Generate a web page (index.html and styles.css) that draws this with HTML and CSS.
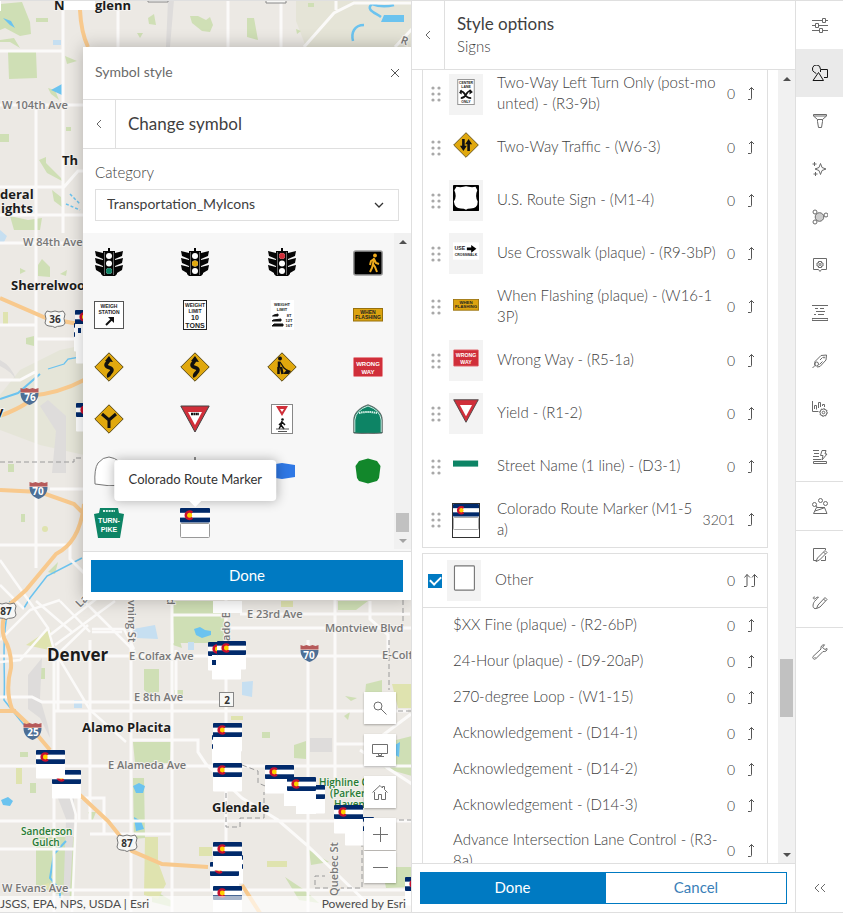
FILE: index.html
```html
<!DOCTYPE html>
<html lang="en">
<head>
<meta charset="utf-8">
<title>Style options - Signs</title>
<link rel="stylesheet" href="styles.css">
</head>
<body>
<svg class="defs" aria-hidden="true">
  <defs>
    <symbol id="flag-top" viewBox="0 0 30 15">
      <rect width="30" height="14.5" rx="1" fill="#012a6b"/><rect y="4.8" width="30" height="4.8" fill="#fff"/>
      <path d="M13 3.600A5 5 0 1 0 13 10.800L10.500 7.200z" fill="#c8102e"/><circle cx="9.600" cy="7.200" r="2.500" fill="#ffd100"/>
    </symbol>
    <symbol id="co" viewBox="0 0 30 30">
      <rect y="14" width="30" height="15.5" rx="1" fill="#fff"/><use href="#flag-top" width="30" height="15"/>
    </symbol>
    <symbol id="co-line" viewBox="0 0 30 30">
      <rect x=".5" y="15.5" width="29" height="14" rx="1" fill="#fff" stroke="#999"/><use href="#flag-top" width="30" height="15"/>
    </symbol>
    <symbol id="signal" viewBox="0 0 30 30">
      <path d="M14 0h2v3h5v2l8-2-1 5-7 3v1l8-2-1 5-7 3v1l8-2-1 5-5 3v1l-2 2H9l-2-2v-1l-5-3-1-5 8 2v-1l-7-3-1-5 8 2v-1L2 8 1 3l8 2V3h5z" fill="#050505"/>
      <path d="M10.500 4v23M19.500 4v23" stroke="#aaa" stroke-width=".6"/>
      <circle cx="15" cy="8" r="3" fill="#fff"/><circle cx="15" cy="15.500" r="3" fill="#fff"/><circle cx="15" cy="23" r="3" fill="#fff"/>
    </symbol>
    <symbol id="diamond" viewBox="0 0 30 30"><path d="M15 .8 29.200 15 15 29.200.8 15z" fill="#e0a80e" stroke="#5b4a16" stroke-width="1" stroke-linejoin="round"/></symbol>
    <symbol id="winding" viewBox="0 0 30 30"><use href="#diamond"/><path d="M15 25c-2-3 3-4 3-7s-6-2-6-5c0-2 2-2 3-5" fill="none" stroke="#111" stroke-width="3.600"/><path d="M15 4l4 6-8-1z" fill="#111"/></symbol>
    <symbol id="wrong" viewBox="0 0 30 20"><rect x=".5" y=".5" width="29" height="19" rx="1" fill="#d02f3a" stroke="#e98c91"/><text class="sign-text sign-text--light sign-text--medium" x="15" y="8.500">WRONG</text><text class="sign-text sign-text--light sign-text--medium" x="15" y="16.500">WAY</text></symbol>
    <symbol id="flashing" viewBox="0 0 30 14"><rect x=".5" y=".5" width="29" height="12.500" fill="#dca310" stroke="#97700d"/><text class="sign-text" x="15" y="5.500">WHEN</text><text class="sign-text" x="15" y="11">FLASHING</text></symbol>
    <symbol id="yield" viewBox="0 0 30 28"><path d="M.8 1h28.400L15 27z" fill="#d02f3a" stroke="#444" stroke-linejoin="round"/><path d="M8 7h14l-7 13z" fill="#fff"/></symbol>
    <symbol id="grip" viewBox="0 0 10 16"><g fill="#a9a9a9"><circle cx="2" cy="2" r="1.600"/><circle cx="8" cy="2" r="1.600"/><circle cx="2" cy="8" r="1.600"/><circle cx="8" cy="8" r="1.600"/><circle cx="2" cy="14" r="1.600"/><circle cx="8" cy="14" r="1.600"/></g></symbol>
    <symbol id="move" viewBox="0 0 16 16"><path d="M5 13.500h2.500q1 0 1-1v-11M6 4l2.500-2.500L11 4" fill="none" stroke="#555"/></symbol>
    <symbol id="move-all" viewBox="0 0 16 16"><path d="M1 13.500h2q1 0 1-1v-11M1.500 4.500 4 1.500l3 3M8.500 13.500h2q1 0 1-1v-11M9 4.500l2.500-3 3 3" fill="none" stroke="#555"/></symbol>
    <symbol id="back" viewBox="0 0 16 16"><path d="M10 4 6 8l4 4" fill="none" stroke="#666"/></symbol>
    <symbol id="interstate" viewBox="0 0 20 18"><path d="M1 5c0 7 4 10 9 12 5-2 9-5 9-12z" fill="#4d6f96"/><path d="M1 0l3 1 3-1 3 1 3-1 3 1 3-1v4.500H1z" fill="#b65a5a"/></symbol>
    <symbol id="us" viewBox="0 0 22 18"><path d="M3 1q4 2 8 0 4 2 8 0l2 3q-2 5 0 9-1 3-4 3-4 0-6 1.500Q9 16 5 16q-3 0-4-3 2-4 0-9z" fill="#f7f7f5" stroke="#777"/></symbol>
  </defs>
</svg>

<main class="app">
  <section class="map" aria-label="Map">
    <svg class="map__canvas" viewBox="0 1 411 911" preserveAspectRatio="xMidYMid slice">
      <rect width="412" height="913" fill="#ece9e4"/>
      <path d="M296 0h116v47H306l-10-26z" fill="#e5e4d7"/>
      <path d="M20 370 60 350 84 345v110L40 445 0 430v-35z" fill="#e5e5d8"/>
      <g fill="#cfdfb5">
        <path d="M0 4 22 2 30 22 31 34 20 36 5 28 0 30zM8 52h28l1 26-28 1zM65 56l12 5-10 3zM36 18h12v4H36zM148 18l6-4 2 11-7-1zM190 16l8 0 8 4 4-3 3 8-3 7-8-1-10-8zM247 18h7l4 22-11-3zM308 3h6v4h-6zM137 33l6 0-3 5zM296 29l5 2-4 3zM0 134h9v8H0zM39 160l7-3 0 6 15 15 1 3-15-8zM10 216l18 4 14-2-2 12H14zM52 190l9 7 1 10-8-6zM66 127h5v4h-5zM48 88l7 2 4 10-8-6zM0 40l14-2 6 10-10-6H0z"/>
        <path d="M38 265l4-6 8 8 0 10-12-1zM20 268l6 3-6 3zM60 274l7-4-1 6zM26 338l8-2v10l-8-2zM8 464h6v8H8zM21 514h4v8h-4zM48 572l10-10-3 12zM172 601h52v42h-50zM144 669h15v23l-10 2-5-4zM39 668h6v11h-6zM133 742h38l-1 21h-35zM174 690h9v8h-9zM262 732h8v6h-8zM412 736l-32 8 4 24 28 8zM294 745l12-4v18l-12-1zM338 601h30l-12 9h-18zM345 696l12 2-6 3zM344 716l6-4-2 8zM366 684l16-4v14h-17zM133 778h11l1 60-11 1zM36 837h38v60l-20-4-18-8zM20 752h8v5h-8zM309 850l20 12-18 3zM382 867h30v20l-26 1zM88 812h8l-4 10zM285 877l18 12 16 14-20-3zM30 783h6v10h-6zM152 889l20 12v6l-20-5zM170 644l10-3 2 7z"/>
      </g>
      <g fill="#dfe3af"><path d="M26 645 50 629l4 22zM42 885l7-2 2 8zM145 837h13v25l8 22-8 15-14-4zM199 847h13v9h-13zM267 861h20v6h-20zM3 312h5v13H3zM281 601h12v6h-12zM16 768h6v16h-6zM392 684h20v24h-14z"/><circle cx="45" cy="529" r="3"/><rect x="231" y="716" width="12" height="4"/></g>
      <g fill="#dedcdb"><path d="M168 0h6l-4 47h-4zM48 400l18 16v57H52l4-42-16-25zM0 360q12 6 16 20-4-8-16-14zM28 675l14-17-2 40 8 28 2 12-10-20-12-9zM52 783h22v40l-5 84h-6l3-88zM310 738h22v14h-22z"/></g>
      <g fill="#c6dff1"><path d="M53 40h8v5h-8zM133 629l22-4 3 14-22-1zM242 682l11-1-1 16-10-2zM74 700h8v8h-8zM188 642h6v8h-6zM0 230l7 6-3 6H0z"/></g>
      <g fill="#6bc3ef"><path d="M3 18l8 3 4 7-5-3zM51 90l11-6v11zM384 15h20v7h-23zM194 629l6-2 5 3 6 1 0 4-9 3-6-3zM133 786l6-3 6 3-2 7h-7zM134 817l7 4 3 8-8 2zM1 800l7-3 5 4-3 5-7-1zM395 745l5-3-1 15-4-2z"/></g>
      <g fill="none" stroke="#6bc3ef" stroke-width="2">
        <path d="M394 5q-12 3-22-1c-7 6 4 9 9 13M364 25c-10 0-13 8-11 16" stroke-width="2.500"/>
        <path d="M0 399 18 393 40 374"/>
        <path d="M48 369l16-5 4-5 12-2" stroke-width="1.300"/>
        <path d="M82 558 47 576 30 598 24 608M10 601C0 640 6 670 4 700l20 25" stroke-width="1.500"/>
        <path d="M66 841l-12 13-4 24 10 12v8"/>
        <path d="M66 204l14 6M70 194l10 10" stroke-width="1.500" stroke-dasharray="3 2"/>
      </g>
      <g fill="none" stroke="#fbfaf9" stroke-width="3">
        <path d="M63 0v233M36 105v463M0 51h63M0 105h84M0 187h64l14-16h6M0 215h84M0 243h84M0 325h36M36 339h48M0 380h20l15-8M50 489h34M0 545h70v14l14 14M118 0v47M228 0v47M281 0v47M336 0v10M304 47l30-34 20-10h58M395 47l17-18"/>
        <path d="M54 656v257M58 650v60M90 640v180M131 600v313M172 600v313M176 650v50M226 600v313M308 640v273M335 600v190M0 656h412M0 697h32l10 5h180M54 711h354M131 740h67l0 12 8 12 36 34 36 22 30 26 60 58M0 766h412M0 821h412M90 834h82M0 849h74M54 890h358M226 628h186M172 615h50M240 614h170M370 601v18l18 16 0 18M79 820v-22h25v36M335 744h36l40-30M360 750l52 34"/>
        <path d="M54 650 90 710 126 742M54 650 48 628 0 560M48 628 20 660 0 662M0 640 30 610 60 600M50 635 100 596M55 645 115 601M60 652 88 625M92 629h32l10 20M92 632h30M84 601 135 652M36 601 72 632M60 601 90 632M0 585l24 24M70 795l6 20-4 98" stroke-width="2.500"/>
      </g>
      <path d="M80 10q1 22 8 37M0 298l46 20 38 7M0 416q36-14 28-20 30-2 56-16M0 490l40 2 34 12 10 10M84 504q-4 38-28 50L26 590 8 606Q0 622 4 638 12 652 11 668 5 690 12 709L28 724 50 750M0 711h16M80 795l28 26 24 30 30 13 46 3M242 885l18 28" fill="none" stroke="#f8c98d" stroke-width="4"/>
      <path d="M0 462h74v-4h10M226 793v34h14v-9h24v-26M242 765l16 6v12l12 5M403 600v26M389 640v50M362 818v70H315v-12h10M390 711h22M412 820h-20" fill="none" stroke="#9a9a9a" stroke-dasharray="5 3"/>
      <g class="map-road">
        <text x="2" y="109">W 104th Ave</text><text x="23" y="246">W 84th Ave</text><text x="247" y="618">E 23rd Ave</text>
        <text x="325" y="632">Montview Blvd</text><text x="129" y="660">E Colfax Ave</text><text x="382" y="659">E-Colf</text>
        <text x="134" y="701">E 8th Ave</text><text x="108" y="769">E Alameda Ave</text><text x="2" y="892">W Evans Ave</text>
        <text transform="translate(128 600) rotate(90)">vning St</text><text transform="translate(230 641) rotate(-90)">ado B</text>
        <text transform="translate(338 896) rotate(-90)">Quebec St</text><text transform="translate(80 608) rotate(-45)">La</text><text transform="translate(400 43) rotate(20)">R</text><text transform="translate(167 598) rotate(90)">d</text>
      </g>
      <g class="map-place">
        <text x="54" y="10">N</text><text x="95" y="10">glenn</text><text x="62" y="165">Th</text><text x="0" y="199">deral</text><text x="1" y="213">ights</text>
        <text x="11" y="290">Sherrelwoo</text><text x="-4" y="416">y</text><text class="map-place--city" x="47" y="661">Denver</text>
        <text x="82" y="732">Alamo Placita</text><text x="212" y="812">Glendale</text>
      </g>
      <g class="map-park">
        <text x="21" y="835">Sanderson</text><text x="32" y="846">Gulch</text><text x="319" y="786">Highline C</text><text x="330" y="797">(Parker</text><text x="334" y="808">Haven</text>
      </g>
      <path d="M64 0h31v10H64zM213 601h29v12h-29zM0 0h1v11H0z" fill="#fff"/>
      <path d="M148 0v2h20V0M266 0v3h20V0" fill="#f7f7f5" stroke="#888"/>
      <g class="map-shield">
        <use href="#us" x="44" y="310" width="22" height="18"/><text x="55" y="323">36</text>
        <use href="#us" x="-5" y="602" width="22" height="18"/><text x="6" y="615">87</text>
        <use href="#us" x="116" y="834" width="22" height="18"/><text x="127" y="847">87</text>
        <rect x="219.500" y="692.500" width="14" height="14" fill="#f7f7f5" stroke="#888"/><text x="227" y="704">2</text>
      </g>
      <g class="map-shield map-shield--interstate">
        <use href="#interstate" x="19" y="388" width="21" height="18"/><text x="30" y="401">76</text>
        <use href="#interstate" x="28" y="482" width="21" height="18"/><text x="38" y="495">70</text>
        <use href="#interstate" x="299" y="645" width="21" height="18"/><text x="309" y="659">70</text>
        <use href="#interstate" x="22" y="723" width="21" height="18"/><text x="33" y="736">25</text>
      </g>
      <g>
        <use href="#co" x="76" y="335" width="29" height="29"/><use href="#co" x="74" y="323" width="29" height="29"/><use href="#co" x="75" y="310" width="29" height="29"/><path d="M75 327l9 2v6h-9z" fill="#fff"/><path d="M78 328h3v5h-3z" fill="#012a6b"/>
        <use href="#co" x="76" y="403" width="29" height="29"/>
        <use href="#co" x="212" y="651" width="29" height="29"/><use href="#co" x="208" y="642" width="29" height="29"/><use href="#co" x="217" y="641" width="29" height="29"/><path d="M212 655h5v9h-5z" fill="#fff"/><path d="M212 660h4v5h-4z" fill="#012a6b"/>
        <use href="#co" x="212" y="735" width="29" height="29"/><use href="#co" x="213" y="723" width="29" height="29"/><use href="#co" x="213" y="763" width="29" height="29"/>
        <use href="#co" x="52" y="770" width="29" height="29"/><use href="#co" x="36" y="750" width="29" height="29"/>
        <use href="#co" x="296" y="785" width="29" height="29"/><use href="#co" x="265" y="765" width="29" height="29"/><use href="#co" x="287" y="777" width="29" height="29"/>
        <path d="M284 791h32v23h-20v-8h-12z" fill="#fff"/>
        <use href="#co" x="345" y="817" width="29" height="29"/><use href="#co" x="334" y="805" width="29" height="29"/>
        <use href="#co" x="214" y="855" width="29" height="29"/><use href="#co" x="210" y="862" width="29" height="29"/><use href="#co" x="213" y="842" width="29" height="29"/><path d="M210 877h29v12h-29z" fill="#fff"/><use href="#co" x="213" y="886" width="29" height="29"/>
        <use href="#co" x="405" y="877" width="29" height="29"/>
      </g>
    </svg>

    <div class="map-tools">
      <button aria-label="Search"><svg viewBox="0 0 16 16"><circle cx="6" cy="6" r="4"/><path d="m9 9 5.500 5.500"/></svg></button>
      <button aria-label="Basemap"><svg viewBox="0 0 16 16"><path d="M.5 2.500h15v9H.5zM6.500 11.500v2h3v-2M4 14.500h8"/></svg></button>
      <button aria-label="Home"><svg viewBox="0 0 16 16"><path d="m.5 8.500 7.500-7 2.500 2.500V2.500h2v3l3 3M2.500 8v7.500h4v-5h3v5h4V8"/></svg></button>
      <div class="map-tools__zoom">
        <button aria-label="Zoom in"><svg viewBox="0 0 16 16"><path d="M8.500 1v15M1 8.500h15"/></svg></button>
        <button aria-label="Zoom out"><svg viewBox="0 0 16 16"><path d="M1 8.500h15"/></svg></button>
      </div>
    </div>
    <footer class="attribution"><span>JSGS, EPA, NPS, USDA | Esri</span><span>Powered by Esri</span></footer>

    <section class="dialog" aria-labelledby="dialog-title">
      <header class="dialog__head"><h2 id="dialog-title">Symbol style</h2><button class="icon-button" aria-label="Close"><svg viewBox="0 0 16 16"><path d="m4 4 8 8m0-8-8 8" fill="none" stroke="#555"/></svg></button></header>
      <div class="dialog__sub"><button class="dialog__back" aria-label="Back"><svg><use href="#back"/></svg></button><h3>Change symbol</h3></div>
      <div class="field">
        <label for="category">Category</label>
        <div class="field__select">
          <select id="category"><option>Transportation_MyIcons</option></select>
          <svg viewBox="0 0 16 16"><path d="m4 6 4 4 4-4" fill="none" stroke="#333" stroke-width="1.300"/></svg>
        </div>
      </div>
      <div class="picker">
        <div class="picker__grid">
          <button aria-label="Green signal"><svg viewBox="0 0 30 30"><use href="#signal"/><circle cx="15" cy="23" r="3" fill="#0d8465"/></svg></button>
          <button aria-label="Yellow signal"><svg viewBox="0 0 30 30"><use href="#signal"/><circle cx="15" cy="15.500" r="3" fill="#e0a80e"/></svg></button>
          <button aria-label="Red signal"><svg viewBox="0 0 30 30"><use href="#signal"/><circle cx="15" cy="8" r="3" fill="#d02f3a"/></svg></button>
          <button aria-label="Walk signal"><svg viewBox="0 0 30 30"><rect x=".8" y="3" width="28.400" height="24" rx="2" fill="#000" stroke="#999" stroke-width="1.500"/><circle cx="22" cy="7.500" r="1.900" fill="#eeaa1c"/><path d="m21 10-1 6 2 3 2 5m-4-8-1 4-2 4m4-13 2 4 3 1m-5-5-3 2-1 4" fill="none" stroke="#eeaa1c" stroke-width="2"/></svg></button>

          <button aria-label="Weigh station"><svg viewBox="0 0 30 30"><rect x=".5" y="1.500" width="29" height="27" fill="#fff" stroke="#555"/><text class="sign-text" x="15" y="8">WEIGH</text><text class="sign-text" x="15" y="14">STATION</text><path d="m12 25 6-6" stroke="#111" stroke-width="2"/><path d="M14 17h6v6z" fill="#111"/></svg></button>
          <button aria-label="Weight limit 10 tons"><svg viewBox="0 0 30 30"><rect x="3.500" y=".5" width="23" height="29" fill="#fff" stroke="#222"/><text class="sign-text" x="15" y="7">WEIGHT</text><text class="sign-text" x="15" y="13">LIMIT</text><text class="sign-text sign-text--large" x="15" y="20">10</text><text class="sign-text sign-text--large" x="15" y="27.500">TONS</text></svg></button>
          <button aria-label="Weight limit by axle"><svg viewBox="0 0 30 30"><rect x="4" width="23" height="30" fill="#fff"/><text class="sign-text sign-text--small" x="15" y="6">WEIGHT</text><text class="sign-text sign-text--small" x="15" y="11">LIMIT</text><path d="M7 15l4-1v2H5.500zM6 20l8-1v2H5zM5 26l2-2h9v2z" fill="#111" stroke="#111"/><text class="sign-text sign-text--small" x="22" y="17">8T</text><text class="sign-text sign-text--small" x="22" y="22">12T</text><text class="sign-text sign-text--small" x="22" y="27">16T</text></svg></button>
          <button aria-label="When flashing"><svg viewBox="0 0 30 30"><use href="#flashing" y="8" width="30" height="14"/></svg></button>

          <button aria-label="Winding road left"><svg viewBox="0 0 30 30"><use href="#winding"/></svg></button>
          <button aria-label="Winding road right"><svg viewBox="0 0 30 30"><use href="#winding"/></svg></button>
          <button aria-label="Workers"><svg viewBox="0 0 30 30"><use href="#diamond"/><circle cx="13" cy="6.500" r="2" fill="#111"/><path d="M12 9.500v6M11.500 15v7M14 15l1.500 7" stroke="#111" stroke-width="2.500" fill="none"/><path d="m13 10 4 6 4 3" fill="none" stroke="#111" stroke-width="1.300"/><path d="m16 22 4-4.500 4 1.500-2.500 3z" fill="#111"/></svg></button>
          <button aria-label="Wrong way"><svg viewBox="0 0 30 30"><use href="#wrong" y="5" width="30" height="20"/></svg></button>

          <button aria-label="Y intersection"><svg viewBox="0 0 30 30"><use href="#diamond"/><path d="M15 24v-8m0 0-7-6m7 6 7-6" stroke="#111" stroke-width="3"/></svg></button>
          <button aria-label="Yield"><svg viewBox="0 0 30 30"><use href="#yield" y="1" width="30" height="28"/><path d="M11 10h8" stroke="#111" stroke-width="2.500" stroke-dasharray="2 .4"/></svg></button>
          <button aria-label="Yield to pedestrians"><svg viewBox="0 0 30 30"><rect x="4.500" y=".5" width="21" height="29" fill="#fff" stroke="#888"/><path d="M9 2h12l-6 10z" fill="#d02f3a"/><path d="M13 5h4l-2 3z" fill="#fff"/><circle cx="15.500" cy="15.500" r="1.300" fill="#111"/><path d="m15 17-1 4 3 4m-3-4-2 4m3-7 3 3m-3-3-3 3" fill="none" stroke="#111" stroke-width="1.500"/><path d="M9 25h13M11 27.500h9" stroke="#555"/></svg></button>
          <button aria-label="California route"><svg viewBox="0 0 30 30"><path d="M.8 29V16C.8 8 8 3 15 .8 22 3 29.200 8 29.200 16v13q-7 .6-14.200.3Q8 29.600.8 29z" fill="#0d8465" stroke="#666"/><path d="M1.800 28V16Q3 6 15 2q12 4 13.200 14v12" fill="none" stroke="#fff" stroke-width=".8"/><path d="M6 9q9-2 18 0" stroke="#d8f0e8" fill="none" stroke-width="2" stroke-dasharray="1.500 .6"/></svg></button>

          <button aria-label="Blank route"><svg viewBox="0 0 30 30"><path d="M1 28q-1-15 3-21Q9 1 15 1q12 2 14 12v16q-14 2-28-1z" fill="#fff" stroke="#777"/></svg></button>
          <button aria-label="State route"><svg viewBox="0 0 30 30"><path d="M15 1v28" stroke="#222"/></svg></button>
          <button aria-label="County route"><svg viewBox="0 0 30 30"><path d="M2 9 15 7l13 2v12l-13 2-13-2z" fill="#2f78e5"/></svg></button>
          <button aria-label="Forest route"><svg viewBox="0 0 30 30"><path d="m6 5 9-2.500L24 5l3.500 5L26 22l-2 3-9 2.500L6 25l-2-3L2.500 10z" fill="#12872b"/></svg></button>

          <button aria-label="Turnpike"><svg viewBox="0 0 30 30"><path d="m6 0h18l1 5 5 1-4 24H4L0 6l5-1z" fill="#0d8465"/><path d="M9 3h12" stroke="#d8f0e8" stroke-width="2" stroke-dasharray="2 .8"/><text class="sign-text sign-text--light sign-text--large" x="15" y="15">TURN-</text><text class="sign-text sign-text--light sign-text--large" x="15" y="24">PIKE</text></svg></button>
          <button class="picker__current" aria-labelledby="tip"><svg viewBox="0 0 30 30"><use href="#co-line"/></svg><span class="tooltip" id="tip" role="tooltip">Colorado Route Marker</span></button>
        </div>
        <div class="scrollbar scrollbar--picker" aria-hidden="true"><i class="scrollbar__up"></i><i class="scrollbar__thumb"></i><i class="scrollbar__down"></i></div>
      </div>
      <footer class="dialog__foot"><button class="button button--primary">Done</button></footer>
    </section>
  </section>

  <section class="panel" aria-labelledby="panel-title">
    <header class="panel__head">
      <button class="panel__back" aria-label="Back"><svg><use href="#back"/></svg></button>
      <div><h1 id="panel-title">Style options</h1><p>Signs</p></div>
    </header>
    <div class="panel__body">
      <div class="groups">
        <ul class="group group--continued">
          <li class="row row--tall"><svg class="grip"><use href="#grip"/></svg><button class="swatch swatch--shaded" aria-label="Edit symbol"><svg viewBox="0 0 30 30"><rect x="5.500" y=".5" width="19" height="29" fill="#fff" stroke="#888"/><text class="sign-text sign-text--small" x="15" y="5.500">CENTER</text><text class="sign-text sign-text--small" x="15" y="10">LANE</text><path d="M8 14q4 0 6 4t7 4M21 13q-4 1-6 5t-6 4" fill="none" stroke="#111" stroke-width="2"/><path d="m7 16 3-4v6zM23 15l-4-3v6z" fill="#111"/><text class="sign-text sign-text--small" x="15" y="28">ONLY</text></svg></button><span class="row__name">Two-Way Left Turn Only (post-mo<br>unted) - (R3-9b)</span><span class="row__count">0</span><button class="move" aria-label="Move"><svg><use href="#move"/></svg></button></li>
          <li class="row"><svg class="grip"><use href="#grip"/></svg><button class="swatch" aria-label="Edit symbol"><svg viewBox="0 0 30 30"><use href="#diamond"/><path d="M12 8v10M18 12v10" stroke="#111" stroke-width="3"/><path d="m8 16 4 6 4-6zM14 14l4-6 4 6z" fill="#111"/></svg></button><span class="row__name">Two-Way Traffic - (W6-3)</span><span class="row__count">0</span><button class="move" aria-label="Move"><svg><use href="#move"/></svg></button></li>
          <li class="row"><svg class="grip"><use href="#grip"/></svg><button class="swatch swatch--shaded" aria-label="Edit symbol"><svg viewBox="0 0 30 30"><rect width="30" height="30" rx="1" fill="#000"/><path d="M4 2q5 1 8 0 3-1 6 0 4 1 8 0l2 4q-3 7 .5 13 0 8-8 8-4 0-5.500 1.500Q13 27 9 27q-7 0-8-8 4-6 .5-13z" fill="#fff"/></svg></button><span class="row__name">U.S. Route Sign - (M1-4)</span><span class="row__count">0</span><button class="move" aria-label="Move"><svg><use href="#move"/></svg></button></li>
          <li class="row"><svg class="grip"><use href="#grip"/></svg><button class="swatch swatch--shaded" aria-label="Edit symbol"><svg viewBox="0 0 30 30"><rect y="5" width="30" height="20" fill="#fff"/><text class="sign-text sign-text--medium" x="8" y="14">USE</text><path d="M16 11h5V8l6 4.500-6 4.500v-3h-5z" fill="#000"/><text class="sign-text sign-text--small" x="15" y="21">CROSSWALK</text></svg></button><span class="row__name">Use Crosswalk (plaque) - (R9-3bP)</span><span class="row__count">0</span><button class="move" aria-label="Move"><svg><use href="#move"/></svg></button></li>
          <li class="row row--tall"><svg class="grip"><use href="#grip"/></svg><button class="swatch" aria-label="Edit symbol"><svg viewBox="0 0 30 30"><use href="#flashing" y="8" width="30" height="14"/></svg></button><span class="row__name">When Flashing (plaque) - (W16-1<br>3P)</span><span class="row__count">0</span><button class="move" aria-label="Move"><svg><use href="#move"/></svg></button></li>
          <li class="row"><svg class="grip"><use href="#grip"/></svg><button class="swatch swatch--shaded" aria-label="Edit symbol"><svg viewBox="0 0 30 30"><use href="#wrong" y="5" width="30" height="20"/></svg></button><span class="row__name">Wrong Way - (R5-1a)</span><span class="row__count">0</span><button class="move" aria-label="Move"><svg><use href="#move"/></svg></button></li>
          <li class="row"><svg class="grip"><use href="#grip"/></svg><button class="swatch swatch--shaded" aria-label="Edit symbol"><svg viewBox="0 0 30 30"><use href="#yield" y="1" width="30" height="28"/></svg></button><span class="row__name">Yield - (R1-2)</span><span class="row__count">0</span><button class="move" aria-label="Move"><svg><use href="#move"/></svg></button></li>
          <li class="row"><svg class="grip"><use href="#grip"/></svg><button class="swatch" aria-label="Edit symbol"><svg viewBox="0 0 30 30"><rect y="11" width="29" height="7" fill="#0d8465"/></svg></button><span class="row__name">Street Name (1 line) - (D3-1)</span><span class="row__count">0</span><button class="move" aria-label="Move"><svg><use href="#move"/></svg></button></li>
          <li class="row row--tall"><svg class="grip"><use href="#grip"/></svg><button class="swatch swatch--selected" aria-label="Edit symbol"><svg viewBox="0 0 30 30"><use href="#co-line"/></svg></button><span class="row__name">Colorado Route Marker (M1-5<br>a)</span><span class="row__count">3201</span><button class="move" aria-label="Move"><svg><use href="#move"/></svg></button></li>
        </ul>
        <div class="group">
          <div class="group__head"><input type="checkbox" checked aria-label="Show other values"><button class="swatch swatch--shaded" aria-label="Edit symbol"><svg viewBox="0 0 30 30"><rect x="4" y="1" width="23" height="28" rx="1" fill="#fff" stroke="#777" stroke-width="1.300"/></svg></button><span class="row__name">Other</span><span class="row__count">0</span><button class="move" aria-label="Move all"><svg><use href="#move-all"/></svg></button></div>
          <ul class="values">
            <li><span class="row__name">$XX Fine (plaque) - (R2-6bP)</span><span class="row__count">0</span><button class="move" aria-label="Move"><svg><use href="#move"/></svg></button></li>
            <li><span class="row__name">24-Hour (plaque) - (D9-20aP)</span><span class="row__count">0</span><button class="move" aria-label="Move"><svg><use href="#move"/></svg></button></li>
            <li><span class="row__name">270-degree Loop - (W1-15)</span><span class="row__count">0</span><button class="move" aria-label="Move"><svg><use href="#move"/></svg></button></li>
            <li><span class="row__name">Acknowledgement - (D14-1)</span><span class="row__count">0</span><button class="move" aria-label="Move"><svg><use href="#move"/></svg></button></li>
            <li><span class="row__name">Acknowledgement - (D14-2)</span><span class="row__count">0</span><button class="move" aria-label="Move"><svg><use href="#move"/></svg></button></li>
            <li><span class="row__name">Acknowledgement - (D14-3)</span><span class="row__count">0</span><button class="move" aria-label="Move"><svg><use href="#move"/></svg></button></li>
            <li class="values__tall"><span class="row__name">Advance Intersection Lane Control - (R3-<br>8a)</span><span class="row__count">0</span><button class="move" aria-label="Move"><svg><use href="#move"/></svg></button></li>
          </ul>
        </div>
      </div>
      <div class="scrollbar scrollbar--panel" aria-hidden="true"><i class="scrollbar__up"></i><i class="scrollbar__thumb"></i><i class="scrollbar__down"></i></div>
    </div>
    <footer class="panel__foot"><button class="button button--primary">Done</button><button class="button button--outline">Cancel</button></footer>
  </section>

  <nav class="rail" aria-label="Layer tools">
    <button aria-label="Properties"><svg viewBox="0 0 16 16"><path d="M0 3.500h10.500M13.500 3.500H16M0 8.500h3.500M6.500 8.500H16M0 13.500h7.500M10.500 13.500H16M10.500 1.500h3v4h-3zM3.500 6.500h3v4h-3zM7.500 11.500h3v4h-3z"/></svg></button>
    <button class="rail__active" aria-label="Styles"><svg viewBox="0 0 16 16"><path d="M8.500 7v-2.500h7v8H12M2.800 7.600A4 4 0 1 1 8.400 4M6.500 7.500 11.500 15.500H1zM2.800 7.600l1.500.9"/></svg></button>
    <button aria-label="Filter"><svg viewBox="0 0 16 16"><path d="M1.500 1.500h13v1.500l-4 3.500H5.500L1.500 3zM1.500 3h13M5.500 6.500v2l1 6h3l1-6v-2"/></svg></button>
    <button aria-label="Effects"><svg viewBox="0 0 16 16"><path d="m8.500 2.500 1.500 4 4 1.500-4 1.500-1.500 4L7 9.500 3 8l4-1.500zM2.500 1v4M.5 3h4M3.500 11v4M1.500 13h4"/></svg></button>
    <button aria-label="Aggregation"><svg viewBox="0 0 16 16"><circle cx="7.500" cy="8" r="4.300" fill="#ccc"/><circle cx="3" cy="3" r="2"/><circle cx="3" cy="13" r="2"/><circle cx="14" cy="6" r="2"/></svg></button>
    <button aria-label="Pop-ups"><svg viewBox="0 0 16 16"><path d="M1.500 1.500h13v11h-5l-1.500 2-1.500-2h-5zM6.500 4.500h3v1.500H11v3H9.500v1.500h-3V9H5V6h1.500z"/><circle cx="8" cy="7.500" r="1"/></svg></button>
    <button aria-label="Fields"><svg viewBox="0 0 16 16"><path d="M0 .5h16M3 3.500h3M8 3.500h4M4 6.500h9M2 9.500h2M6 9.500h6M0 13.500h16v2H0z"/></svg></button>
    <button aria-label="Labels"><svg viewBox="0 0 16 16"><path d="M3 8.500 9 2.500l5.500-.5-.5 5-6 6.500-3 .5M10.500 8.500 7.500 11.500M8 7l2.500-2.500"/><circle cx="12" cy="4.500" r=".6"/><circle cx="4.500" cy="11" r="2"/><path d="M3 8.500v4L.5 15"/></svg></button>
    <button aria-label="Charts"><svg viewBox="0 0 16 16"><path d="M.5 0v10.500h6M2.500 8V4.500h2V8.500M6.500 7V1.500h2V6M10.500 5V3.500h2V6"/><circle cx="11.500" cy="11.500" r="3.500"/><circle cx="11.500" cy="11.500" r="4" stroke-dasharray="1 2.100"/><circle cx="11.500" cy="11.500" r="1.300"/></svg></button>
    <button aria-label="Refresh interval"><svg viewBox="0 0 16 16"><path d="M1 1.500h6M2 4.500h5M1 7.500h6M1 10.500h8M1.500 12.500h13v2H1.500zM10 1.500h4l-1 3.500h2l-5 6 1-4.500H8.500z"/></svg></button>
    <hr>
    <button aria-label="Group"><svg viewBox="0 0 16 16"><circle cx="8.500" cy="2.500" r="2"/><circle cx="2.500" cy="6.500" r="2"/><circle cx="13.500" cy="5.500" r="2"/><path d="M4.500 9.500h8l2.500 6H1.500zM3 13l6-2 4-1.500M4 7.500l1 1.500"/></svg></button>
    <hr>
    <button aria-label="Sketch"><svg viewBox="0 0 16 16"><path d="M4 13.500H1.500v-12h12V3M13.500 9v4.500H9M13 3.500l2 2L7.500 13 4 14.500 5.500 11zM11.500 5l2 2"/></svg></button>
    <button aria-label="Edit"><svg viewBox="0 0 16 16"><path d="M13 2.500l2 2L8 12l-3.500 1.500L6 10zM11.500 4l2 2M4.500 13.500C0 14.500 .5 9 2.500 6.500S7.500 2 6 2 3 4.500 2 4 .5 2 3 2"/></svg></button>
    <hr>
    <button aria-label="Settings"><svg viewBox="0 0 16 16"><path d="M15 4.500 13 5.500 10.500 3.500 12.500.8C10 .5 8.500 2.500 9 5L1 12.500C0 14 2 16 3.500 15L11 7.500c2.500.5 4.500-1 4-3zM2.500 13.500h1"/></svg></button>
    <button class="rail__collapse" aria-label="Collapse"><svg viewBox="0 0 16 16"><path d="M7 4 3 8l4 4M13 4 9 8l4 4"/></svg></button>
  </nav>
</main>
</body>
</html>
```
FILE: styles.css
```css
:root {
  --line: #dfdfdf;
  --blue: #007ac2;
  --text: #404040;
}

* { box-sizing: border-box; }

body {
  margin: 0;
  font: 400 15px/21px Lato, "Liberation Sans", sans-serif;
  color: var(--text);
}

h1, h2, h3, p, ul { margin: 0; padding: 0; font-weight: 400; }
ul { list-style: none; }
button { padding: 0; border: 0; background: none; font: inherit; color: inherit; }
svg { display: block; }
.defs { position: absolute; width: 0; height: 0; }

.app {
  display: grid;
  grid-template-columns: minmax(0, 1fr) 383px 48px;
  height: 100vh;
  border-top: 1px solid var(--line);
  border-bottom: 1px solid var(--line);
  overflow: hidden;
}

/* Map */
.map { position: relative; overflow: hidden; border-right: 1px solid var(--line); }
.map__canvas { width: 100%; height: 100%; font-family: "Open Sans", sans-serif; }
.map-road { font-size: 11px; font-weight: 600; fill: #777; stroke: #f4f2ef; stroke-width: 2px; paint-order: stroke; }
.map-place { font-size: 13px; font-weight: 700; fill: #1c1c1c; stroke: #f4f2ef; stroke-width: 2px; paint-order: stroke; }
.map-place--city { font-size: 17px; }
.map-park { font-size: 10px; font-weight: 600; fill: #267a35; stroke: #f0f2e8; stroke-width: 2px; paint-order: stroke; }
.map-shield { font-size: 10px; font-weight: 700; fill: #333; text-anchor: middle; }
.map-shield--interstate { fill: #fff; }
.sign-text { font: 700 5px "Liberation Sans", sans-serif; fill: #222; text-anchor: middle; }
.sign-text--small { font-size: 4px; }
.sign-text--medium { font-size: 6px; }
.sign-text--large { font-size: 7px; }
.sign-text--light { fill: #fff; }

.map-tools { position: absolute; right: 15px; bottom: 29px; display: grid; gap: 10px; }
.map-tools button { display: grid; place-items: center; width: 32px; height: 32px; background: #fff; box-shadow: 0 1px 2px rgba(0, 0, 0, .3); }
.map-tools svg { width: 16px; height: 16px; fill: none; stroke: #6e6e6e; }
.map-tools__zoom { display: grid; gap: 1px; }

.attribution {
  position: absolute; right: 0; bottom: 0; left: 0;
  display: flex; justify-content: space-between;
  padding: 0 5px 0 0;
  background: rgba(255, 255, 255, .66);
  font-size: 12px; line-height: 16px; color: #4c4c4c;
}

/* Symbol dialog */
.dialog {
  position: absolute; top: 46px; right: 0;
  width: 328px;
  background: #fff;
  box-shadow: 0 0 16px rgba(0, 0, 0, .25);
}
.dialog__head { display: flex; align-items: center; justify-content: space-between; height: 53px; padding: 0 8px 0 12px; border-bottom: 1px solid var(--line); }
.dialog__head h2 { padding-bottom: 3px; font-size: 14px; color: #6a6a6a; }
.icon-button svg { width: 16px; height: 16px; }
.dialog__sub { display: flex; align-items: center; height: 49px; border-bottom: 1px solid var(--line); }
.dialog__sub h3 { padding: 0 0 2px 12px; font-size: 17px; }
.dialog__back, .panel__back { display: grid; place-items: center; width: 33px; height: 100%; border-right: 1px solid var(--line); }
.dialog__back svg, .panel__back svg { width: 16px; height: 16px; }
.field { display: grid; gap: 6px; padding: 13px 12px 12px; }
.field label { font-weight: 300; }
.field__select { position: relative; }
.field__select select { width: 100%; height: 32px; padding: 0 11px 3px; border: 1px solid var(--line); border-radius: 0; appearance: none; background: #fff; font: inherit; font-size: 14px; color: inherit; }
.field__select svg { position: absolute; top: 8px; right: 12px; width: 16px; height: 16px; pointer-events: none; }
.picker { display: flex; background: #f7f7f7; border-bottom: 1px solid var(--line); }
.picker__grid { flex: 1; display: grid; grid-template-columns: repeat(4, 30px); justify-content: space-between; row-gap: 22px; padding: 15px 11px 13px; }
.picker__grid svg { width: 30px; height: 30px; }
.picker__current { position: relative; }
.tooltip {
  position: absolute; bottom: 37px; left: 50%; transform: translateX(-50%);
  padding: 9px 14px 12px;
  border-radius: 4px;
  background: #fff;
  box-shadow: 0 0 12px rgba(0, 0, 0, .3);
  font-size: 13px; line-height: 20px; color: #323232; white-space: nowrap;
}
.tooltip::after { content: ""; position: absolute; top: 100%; left: 50%; margin-left: -6px; border: 6px solid transparent; border-top-color: #fff; border-bottom: 0; }
.dialog__foot { padding: 8px; }
.dialog__foot .button { width: 100%; }

.button { height: 32px; padding-bottom: 2px; border: 1px solid var(--blue); }
.button--primary { background: var(--blue); color: #fff; }
.button--outline { background: #fff; color: #3b7fb8; }

/* Scrollbars */
.scrollbar { display: grid; grid-template-rows: 17px 1fr 17px; justify-items: center; align-items: center; width: 17px; background: #f1f1f1; }
.scrollbar__up, .scrollbar__down { border: 4px solid transparent; }
.scrollbar__up { border-top: 0; border-bottom-color: #505050; }
.scrollbar__down { border-bottom: 0; border-top-color: #505050; }
.scrollbar__thumb { width: 13px; background: #c1c1c1; }
.scrollbar--picker { height: 316px; }
.scrollbar--picker .scrollbar__thumb { align-self: end; height: 19px; }
.scrollbar--picker .scrollbar__down { border-top-color: #a3a3a3; }
.scrollbar--panel .scrollbar__thumb { align-self: start; height: 58px; margin-top: 572px; }

/* Style panel */
.panel { display: flex; flex-direction: column; min-height: 0; background: #fff; }
.panel__head { display: flex; align-items: center; height: 69px; border-bottom: 1px solid var(--line); }
.panel__head > div { padding: 0 0 2px 12px; }
.panel__head h1 { font-size: 17px; line-height: 24px; }
.panel__head p { line-height: 20px; font-weight: 300; }
.panel__body { flex: 1; display: flex; min-height: 0; }
.groups { flex: 1; min-width: 0; padding: 0 10px; overflow: hidden; }
.group { border: 1px solid var(--line); }
.group--continued { margin: -4px 0 5px; }
.row, .group__head { display: flex; align-items: center; height: 53px; padding: 0 8px; }
.row--tall { height: 54px; }
.grip { flex: none; width: 10px; height: 16px; margin-right: 8px; }
.swatch { flex: none; width: 34px; height: 41px; margin-right: 14px; padding: 5px 0 10px 4px; }
.swatch svg { width: 26px; height: 26px; }
.swatch--shaded { background: #f3f3f3; }
.swatch--selected { width: 28px; height: 35px; margin: 0 17px 0 3px; padding: 0 0 7px; border: 1px solid #323232; background: #fff; }
.row__name { flex: 1; min-width: 0; padding-bottom: 3px; white-space: nowrap; font-weight: 300; }
.row__count { padding-bottom: 1px; font-size: 14px; font-weight: 300; }
.move { flex: none; width: 16px; height: 16px; margin-left: 8px; }
.move svg { width: 16px; height: 16px; }
.group__head { height: 54px; padding-left: 5px; border-bottom: 1px solid var(--line); }
.group__head input {
  flex: none; width: 14px; height: 14px; margin: 0 5px 0 0; appearance: none;
  display: grid; place-items: center; background: var(--blue);
}
.group__head input::before { content: ""; width: 5px; height: 9px; margin-bottom: 3px; border: solid #fff; border-width: 0 2px 2px 0; transform: rotate(45deg); }
.values li { display: flex; align-items: center; height: 36px; padding: 0 8px 0 30px; }
.values .values__tall { height: 54px; }
.panel__foot { display: grid; grid-template-columns: 185px 1fr; height: 49px; padding: 8px; border-top: 1px solid var(--line); }

/* Tool rail */
.rail { display: flex; flex-direction: column; border-left: 1px solid var(--line); background: #fff; }
.rail button { display: grid; place-items: center; flex: none; height: 48px; }
.rail svg { width: 16px; height: 16px; fill: none; stroke: #6a6a6a; }
.rail .rail__active { background: #eaeaea; }
.rail__active svg { stroke: #151515; }
.rail hr { width: 100%; margin: 0; border: 0; border-top: 1px solid var(--line); }
.rail .rail__collapse { margin-top: auto; }
```
